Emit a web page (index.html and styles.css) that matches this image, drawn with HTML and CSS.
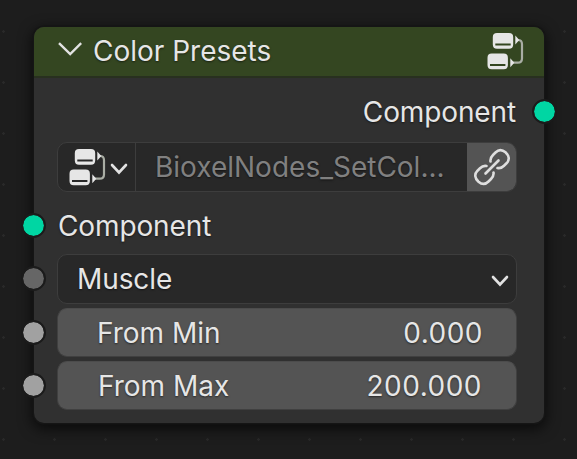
FILE: index.html
```html
<!DOCTYPE html>
<html lang="en">
<head>
<meta charset="utf-8">
<title>Color Presets</title>
<link rel="stylesheet" href="styles.css">
</head>
<body>
<svg class="defs" width="0" height="0" aria-hidden="true">
  <symbol id="nodes" viewBox="0 0 38 38">
    <path d="M31 8h1q4 0 4 4.200v14.200q0 4.200-4.200 4.200H26" fill="none" stroke="#a9ada4" stroke-width="2.200"/>
    <path d="M29.300 3.500L33.300 8L29.300 12.500ZM24.300 26.300L28.300 30.800L24.300 35.300Z" fill="#e6e6e6"/>
    <path fill-rule="evenodd" fill="#e6e6e6" d="M11 1H23q4.200 0 4.200 4.200V12.500q0 4.200-4.200 4.200H11Q6.800 16.700 6.800 12.500V5.200q0-4.200 4.200-4.200ZM9.300 11.500V13.600H24.700V11.500ZM5.700 21.500H17.700q4.200 0 4.200 4.200V33q0 4.200-4.200 4.200H5.700Q1.500 37.200 1.500 33V25.700q0-4.200 4.200-4.200ZM4 32V34.100H19.400V32Z"/>
  </symbol>
</svg>
<main class="node">
  <header class="header">
    <svg class="collapse" viewBox="0 0 24 14"><path d="M1 1.200L12.200 12L23.200 1.200"/></svg>
    <h1 class="title">Color Presets</h1>
    <svg class="nodes-icon"><use href="#nodes"/></svg>
  </header>
  <div class="output"><span class="out-label">Component</span><i class="socket socket-out geometry"></i></div>
  <div class="group">
    <div class="browse">
      <svg class="nodes-icon"><use href="#nodes"/></svg>
      <svg class="chevron" viewBox="0 0 18 12"><path d="M2 2L9 9.500L16 2"/></svg>
    </div>
    <div class="name">BioxelNodes_SetCol...</div>
    <div class="link">
      <svg width="38" height="38" viewBox="0 0 38 38"><g fill="none" stroke="#dedede" stroke-width="2.600" stroke-linecap="round"><path d="M12.500 25.500L25.500 12.500"/><path d="M17.500 13.500C17 10.500 18 9 20 7L22.500 4.500C25.500 1.500 29 1.300 32.500 4.300C36.500 8 36.700 12 33.500 15.300L31 17.700C29 19.700 27 20.600 24.500 20"/><path d="M20.500 24.500C21 27.500 20 29 18 31L15.500 33.500C12.500 36.500 9 36.700 5.500 33.700C1.500 30 1.300 26 4.500 22.700L7 20.300C9 18.300 11 17.400 13.500 18"/></g></svg>
    </div>
  </div>
  <div class="input component"><i class="socket geometry"></i>Component</div>
  <div class="input menu"><i class="socket menu-socket"></i>Muscle<svg class="chevron" viewBox="0 0 18 12"><path d="M2 2L9 9.500L16 2"/></svg></div>
  <div class="input number min"><i class="socket float"></i><span>From Min</span><span class="value">0.000</span></div>
  <div class="input number max"><i class="socket float"></i><span>From Max</span><span class="value">200.000</span></div>
</main>
</body>
</html>
```
FILE: styles.css
```css
* { box-sizing: border-box; }
body {
  margin: 0;
  height: 459px;
  padding: 27px 33px 0 34px;
  overflow: hidden;
  background: radial-gradient(circle at 3.5px 31.5px, #292929 0, #292929 1px, transparent 1.5px) 0 0 / 51px 51px #1d1d1d;
  color: #e6e6e6;
  font: 28px/34px Inter, sans-serif;
  text-shadow: 0 1px 2px #0008;
}
.defs { position: absolute; }
.node {
  display: flow-root;
  width: 510px;
  height: 396px;
  border-radius: 10px;
  background: #303030;
  box-shadow: 0 0 0 1.500px #151515, 0 4px 14px 2px #000a;
}
.header {
  display: flex;
  align-items: center;
  height: 51px;
  padding: 0 20px 2px 24px;
  border-bottom: 2px solid #28301f;
  border-radius: 10px 10px 0 0;
  background: #344621;
}
.collapse { width: 24px; height: 14px; margin-top: -3px; }
.collapse path, .chevron path { fill: none; stroke: #e2e2e2; stroke-width: 2.400; }
.title { margin: 0 auto 0 11px; font: inherit; }
.nodes-icon { width: 38px; height: 38px; flex: none; }
.output {
  position: relative;
  display: flex;
  justify-content: flex-end;
  align-items: center;
  height: 34px;
  margin-top: 17px;
  padding-right: 28px;
  letter-spacing: -0.120px;
}
.socket {
  position: absolute;
  left: -36px;
  top: 50%;
  width: 25px;
  height: 25px;
  margin-top: -13.500px;
  border: 2px solid #1b1b1b;
  border-radius: 50%;
  background-clip: padding-box;
}
.socket-out { left: auto; right: -13px; }
.geometry { background-color: #00d6a3; }
.menu-socket { background-color: #666; }
.float { background-color: #a1a1a1; }
.group {
  display: flex;
  width: 460px;
  height: 50px;
  margin: 13px 0 0 23px;
  overflow: hidden;
  border: 1px solid #3d3d3d;
  border-radius: 10px;
  background: #282828;
}
.browse {
  display: flex;
  align-items: center;
  width: 78px;
  padding-left: 10px;
  border-right: 1px solid #3d3d3d;
}
.chevron { width: 18px; height: 12px; }
.browse .chevron { margin: 3px 0 0 4px; }
.chevron path { stroke-width: 2.600; stroke-linecap: round; }
.name { flex: 1; padding: 7px 0 0 19px; color: #808080; white-space: nowrap; }
.link { display: grid; place-items: center; width: 49px; background: #545454; }
.input {
  position: relative;
  display: flex;
  align-items: center;
  width: 460px;
  margin-left: 23px;
}
.component { height: 34px; margin-top: 17px; padding-left: 1px; letter-spacing: -0.120px; }
.menu {
  height: 50px;
  margin-top: 11px;
  padding: 0 7px 0 19px;
  border: 1px solid #3d3d3d;
  border-radius: 10px;
  background: #282828;
  letter-spacing: -0.100px;
}
.menu .socket, .number .socket { left: -37px; }
.menu .chevron { margin: 4px 0 0 auto; }
.number {
  height: 49px;
  margin-top: 4px;
  padding: 0 33px 0 39px;
  border: 1px solid #404040;
  border-top-color: #4c4c4c;
  border-radius: 10px;
  background: #545454;
}
.number .socket { margin-top: -12.500px; }
.max { padding-left: 40px; }
.value { margin-left: auto; letter-spacing: 0.500px; }
.max .value { padding-right: 1px; }
```
